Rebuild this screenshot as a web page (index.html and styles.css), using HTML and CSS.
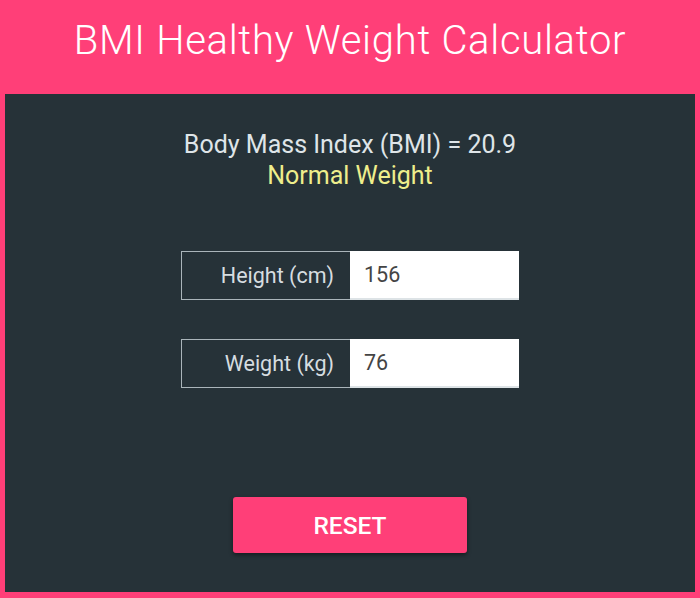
FILE: index.html
```html
<!DOCTYPE html>
<html>
<head>
<meta charset="utf-8">
<link rel="stylesheet" href="styles.css">
</head>
<body>
<div class="app">
  <header class="header"><h1 class="title">BMI Healthy Weight Calculator</h1></header>
  <main class="panel">
    <div class="result">
      <div class="bmi">Body Mass Index (BMI) = 20.9</div>
      <div class="status">Normal Weight</div>
    </div>
    <div class="fields">
      <div class="row">
        <div class="label">Height (cm)</div>
        <div class="input">156</div>
      </div>
      <div class="row">
        <div class="label">Weight (kg)</div>
        <div class="input">76</div>
      </div>
    </div>
    <button class="reset">RESET</button>
  </main>
</div>
</body>
</html>
```
FILE: styles.css
```css
html, body {
  margin: 0;
  padding: 0;
}
body {
  width: 700px;
  height: 598px;
  background: #ff3f78;
  font-family: Roboto, "Liberation Sans", sans-serif;
  overflow: hidden;
}
.app {
  display: flex;
  flex-direction: column;
  height: 598px;
  padding: 0 5px 6px;
  box-sizing: border-box;
}
.header {
  height: 94px;
  display: flex;
  justify-content: center;
  align-items: flex-start;
}
.title {
  margin: 17px 0 0;
  font-family: Roboto, sans-serif;
  font-weight: 300;
  font-size: 40px;
  color: #fff;
  letter-spacing: 0.7px;
  word-spacing: 0;
  line-height: 48px;
}
.panel {
  flex: 1;
  background: #263238;
  display: flex;
  flex-direction: column;
  align-items: center;
}
.result {
  margin-top: 35px;
  text-align: center;
  font-size: 25px;
  line-height: 31px;
}
.bmi {
  color: #dfe5e8;
}
.status {
  color: #eeee8c;
}
.fields {
  margin-top: 60px;
  display: flex;
  flex-direction: column;
  gap: 39px;
}
.row {
  display: flex;
  height: 49px;
}
.label {
  width: 169px;
  box-sizing: border-box;
  border: 1.5px solid #aab5ba;
  border-right: none;
  color: #d6dde0;
  font-size: 21.5px;
  display: flex;
  align-items: center;
  justify-content: flex-end;
  padding-right: 16px;
}
.input {
  width: 169px;
  box-sizing: border-box;
  background: #fff;
  color: #444;
  font-size: 21.5px;
  display: flex;
  align-items: center;
  padding-left: 14px;
  border-bottom: 2px solid #dde3e6;
}
.reset {
  margin-top: 109px;
  width: 234px;
  height: 56px;
  border: none;
  border-radius: 3px;
  background: #ff3f78;
  color: #fff;
  font-family: Roboto, sans-serif;
  font-weight: 500;
  font-size: 24.5px;
  box-shadow: 0 2px 4px rgba(0,0,0,0.45);
  padding: 0;
}
```
